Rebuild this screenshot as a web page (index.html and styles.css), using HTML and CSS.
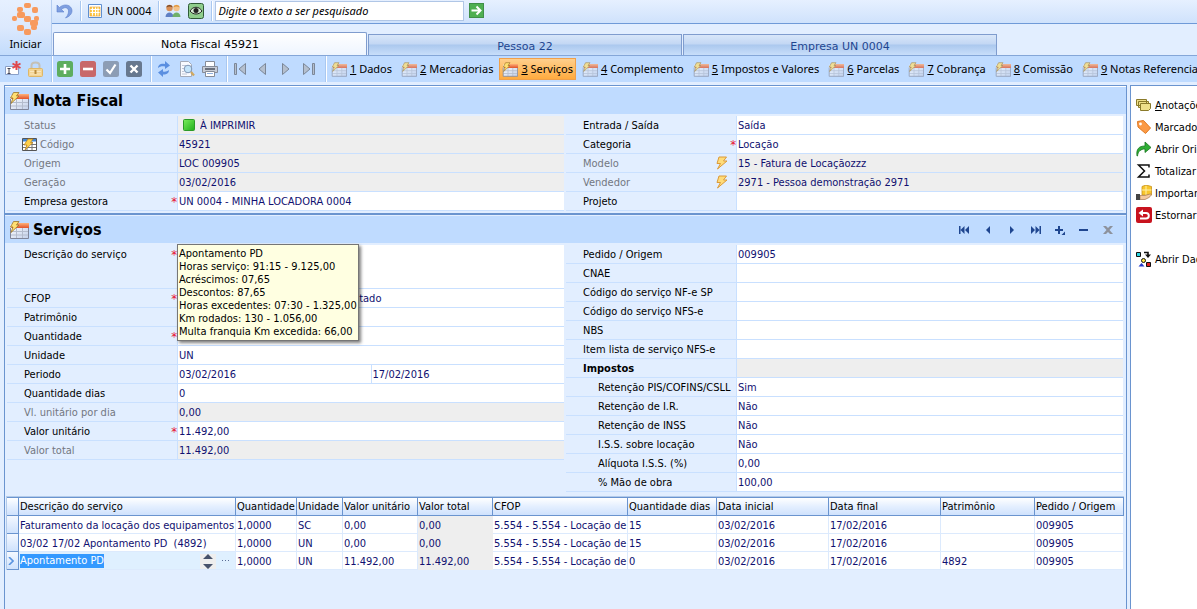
FILE: index.html
```html
<!DOCTYPE html>
<html lang="pt-BR">
<head>
  <meta charset="UTF-8" />
  <meta name="viewport" content="width=device-width, initial-scale=1.0" />
  <title>Nota Fiscal 45921</title>
  <link rel="stylesheet" href="styles.css">
</head>
<body>
  <!-- shared icons -->
  <svg class="sprite" aria-hidden="true">
    <defs>
      <linearGradient id="g-head" x1="0" y1="0" x2="0" y2="1">
        <stop offset="0" stop-color="#ffb27a"/><stop offset="1" stop-color="#e2532a"/>
      </linearGradient>
      <linearGradient id="g-cell" x1="0" y1="0" x2="1" y2="1">
        <stop offset="0" stop-color="#ffffff"/><stop offset="1" stop-color="#c3d0ea"/>
      </linearGradient>
      <linearGradient id="g-green" x1="0" y1="0" x2="1" y2="1">
        <stop offset="0" stop-color="#7bee5c"/><stop offset="1" stop-color="#1fae1b"/>
      </linearGradient>
      <symbol id="i-table" viewBox="0 0 20 18">
        <path d="M1.500 3H19.500v14.500h-18z" fill="url(#g-cell)"/>
        <path d="M5.500 2H20v5H2z" fill="url(#g-head)"/>
        <path d="M2 10.500h17M2 14h17M7.500 7v10M13.500 7v10" stroke="#b4bccd" fill="none"/>
        <path d="M1.500 7v10.500h18V7" stroke="#80869a" fill="none"/>
        <path d="M4.500.5h5.500L7.500 4H10L2 11.500 4 6H1.500z" fill="#ffe073" stroke="#9a7428" stroke-width=".8"/>
      </symbol>
      <symbol id="i-bolt" viewBox="0 0 12 14">
        <path d="M3 1h7.500L7.500 5h3.500L1.500 13l3-5.500H1z" fill="#ffdc7a" stroke="#dc9a38"/>
      </symbol>
    </defs>
  </svg>

  <header class="top">
    <button class="start" type="button">
      <svg width="28" height="32" viewBox="0 0 28 32" fill="#f79a5e">
        <rect x="12" y="0" width="7" height="5" rx="2"/>
        <rect x="5" y="4" width="6" height="5" rx="2"/>
        <rect x="20" y="4" width="6" height="6" rx="2"/>
        <rect x="5" y="9" width="8" height="6" rx="2"/>
        <rect x="0" y="13" width="5" height="5" rx="2"/>
        <rect x="12" y="13" width="7" height="6" rx="2"/>
        <rect x="22" y="13" width="5" height="5" rx="2"/>
        <rect x="18" y="17" width="8" height="6" rx="2"/>
        <rect x="5" y="22" width="7" height="6" rx="2"/>
        <rect x="19" y="22" width="6" height="5" rx="2"/>
        <rect x="12" y="26" width="7" height="6" rx="2"/>
      </svg>
      <span>Iniciar</span>
    </button>

    <div class="top-main">
      <div class="quick">
        <button class="quick-undo" type="button" aria-label="Desfazer">
          <svg width="18" height="16" viewBox="0 0 18 16"><path d="M1 2v7h7L5.500 6.500C9 3 13 5 12.500 9c-.3 2.500-1.500 4.500-3 6C15 13 17 9 15.500 5.500 13.500 1 7 1 3.500 4.500z" fill="#7f9fe0" stroke="#5c80cc" stroke-width=".6"/></svg>
        </button>
        <span class="sep"></span>
        <button class="quick-unit" type="button">
          <svg width="14" height="14" viewBox="0 0 14 14"><path fill="#fff" stroke="#5f8fd0" d="M.5.5h13v13H.5z"/><path fill="#ffca4d" d="M2 3h10v9H2z"/><path d="M2 5.500h10M2 8.500h10M4.500 3v9M7.500 3v9M10 3v9" stroke="#fff"/><path d="M2 3h10v9H2z" fill="none" stroke="#e8a030" stroke-width=".6"/></svg>
          <span>UN 0004</span>
        </button>
        <span class="sep"></span>
        <button class="quick-icon" type="button" aria-label="Usuários">
          <svg width="16" height="14" viewBox="0 0 16 14"><circle cx="4.500" cy="4" r="3.200" fill="#d98f56"/><path d="M1.500 3.500C1 0 8 0 7.500 3.500 6 2 3 2 1.500 3.500z" fill="#7a4a28"/><path d="M.5 13c0-6 8-6 8 0z" fill="#5f7fc4"/><circle cx="11.500" cy="4" r="3.200" fill="#f3c38b"/><path d="M8.500 3.500C8 0 15 0 14.500 3.500 13 2 10 2 8.500 3.500z" fill="#e0953c"/><path d="M7.500 13c0-6 8-6 8 0z" fill="#6fb06a"/></svg>
        </button>
        <button class="quick-icon" type="button" aria-label="Visualizar">
          <svg width="16" height="16" viewBox="0 0 16 16"><rect x=".5" y=".5" width="15" height="15" rx="2" fill="#8fce8c" stroke="#2f5a37"/><path d="M2 8c3-5 9-5 12 0-3 4-9 4-12 0z" fill="#d8efd6" stroke="#222"/><circle cx="8" cy="7.500" r="2.500" fill="#222"/></svg>
        </button>
        <span class="sep"></span>
        <input class="search" type="text" aria-label="Pesquisar" placeholder="Digite o texto a ser pesquisado">
        <button class="quick-go" type="button" aria-label="Ir">
          <svg width="15" height="15" viewBox="0 0 15 15"><rect x=".5" y=".5" width="14" height="14" fill="#4faf52" stroke="#3f8f48"/><path d="M2.500 7.500h9M7.500 3.500l4 4-4 4" stroke="#fff" stroke-width="2" fill="none"/></svg>
        </button>
      </div>
      <nav class="tabs">
        <button class="tab active" type="button">Nota Fiscal 45921</button>
        <button class="tab" type="button">Pessoa 22</button>
        <button class="tab" type="button">Empresa UN 0004</button>
      </nav>
    </div>
  </header>

  <div class="toolbar">
    <div class="tools">
      <button type="button" aria-label="Renomear"><svg width="16" height="16" viewBox="0 0 16 16"><path fill="#fff" stroke="#8aa0c8" d="M.5 5.500h13v8H.5z"/><path d="M2.500 7.500h3M4 7.500v5M2.500 12.500h3" stroke="#445" fill="none"/><path d="M11.500 0v9M7.500 2.500l8 4.500M15.500 2.500l-8 4.500" stroke="#e0484c" stroke-width="2"/></svg></button>
      <button type="button" aria-label="Bloquear"><svg width="15" height="16" viewBox="0 0 15 16"><path d="M3.500 8V4.500c0-4 8-4 8 0V8" fill="none" stroke="#c4c0b6" stroke-width="2"/><rect x=".5" y="7.500" width="14" height="8" rx="1" fill="#f3d494" stroke="#dfb766"/><path d="M2 10.500h11M2 13h11" stroke="#fbe7bd"/><path d="M7.500 9v4" stroke="#b98b3a" stroke-width="2"/></svg></button>
    </div>
    <span class="sep"></span>
    <div class="tools">
      <button type="button" aria-label="Incluir"><svg width="16" height="16" viewBox="0 0 16 16"><rect width="16" height="16" rx="2.500" fill="#5dad5f"/><path d="M8 3v10M3 8h10" stroke="#fff" stroke-width="2.600"/></svg></button>
      <button type="button" aria-label="Excluir"><svg width="16" height="16" viewBox="0 0 16 16"><rect width="16" height="16" rx="2.500" fill="#c8686a"/><path d="M3 8h10" stroke="#fff" stroke-width="2.600"/></svg></button>
      <button type="button" aria-label="Confirmar"><svg width="16" height="16" viewBox="0 0 16 16"><rect width="16" height="16" rx="2.500" fill="#8c9db5"/><path d="M3.500 8.500l3.500 3.500 5.500-8.500" stroke="#fff" stroke-width="2.200" fill="none"/></svg></button>
      <button type="button" aria-label="Cancelar"><svg width="16" height="16" viewBox="0 0 16 16"><rect width="16" height="16" rx="2.500" fill="#67788f"/><path d="M4.500 4.500l7 7M11.500 4.500l-7 7" stroke="#fff" stroke-width="2.400"/></svg></button>
    </div>
    <span class="sep"></span>
    <div class="tools">
      <button type="button" aria-label="Atualizar"><svg width="16" height="16" viewBox="0 0 16 16"><path d="M2 7c0-4 4-5 7-4V0l5 4.500L9 8V5.500C6 5 4 5.500 2 7z" fill="#5b8fe0"/><path d="M13 9c0 4-4 5-6 4.500V16l-5-4.500L7 8v2.500c2 .5 4 0 6-1.500z" fill="#5b8fe0"/></svg></button>
      <button type="button" aria-label="Visualizar impressão"><svg width="16" height="16" viewBox="0 0 16 16"><path fill="#f8faff" stroke="#a5abb8" d="M1.500.5h8l3 3v12h-11z"/><path d="M3 4.500h4M3 7.500h2M3 10.500h2M3 13h5" stroke="#c0c7d6"/><circle cx="9" cy="8" r="3.800" fill="#c4e4fa" stroke="#7d94b4"/><path d="M12 11l3 3.500" stroke="#d0a860" stroke-width="2.200"/></svg></button>
      <button type="button" aria-label="Imprimir"><svg width="16" height="16" viewBox="0 0 16 16"><path fill="#fff" stroke="#868c98" d="M3.500.5h9v5h-9z"/><path fill="#c7ccd6" stroke="#868c98" d="M.5 5.500h15v6H.5z"/><path fill="#6a707b" d="M3 7h10v2H3z"/><path fill="#fff" stroke="#868c98" d="M3.500 10.500h9v5h-9z"/><path d="M5 12.500h6" stroke="#8fb0e0"/></svg></button>
    </div>
    <span class="sep"></span>
    <div class="tools">
      <button type="button" aria-label="Primeiro"><svg width="16" height="14" viewBox="0 0 16 14" fill="#b4bfce" stroke="#7c8797"><path d="M2.500 1.500h2v11h-2zM13.500 1.500v11L7 7z"/></svg></button>
      <button type="button" aria-label="Anterior"><svg width="16" height="14" viewBox="0 0 16 14" fill="#b4bfce" stroke="#7c8797"><path d="M10.500 1.500v11L4 7z"/></svg></button>
      <button type="button" aria-label="Próximo"><svg width="16" height="14" viewBox="0 0 16 14" fill="#b4bfce" stroke="#7c8797"><path d="M4.500 1.500v11L11 7z"/></svg></button>
      <button type="button" aria-label="Último"><svg width="16" height="14" viewBox="0 0 16 14" fill="#b4bfce" stroke="#7c8797"><path d="M11.500 1.500h2v11h-2zM2.500 1.500v11L9 7z"/></svg></button>
    </div>
    <span class="sep"></span>
    <nav class="pages">
      <button class="page" type="button"><svg><use href="#i-table"/></svg><span><u>1</u> Dados</span></button>
      <button class="page" type="button"><svg><use href="#i-table"/></svg><span><u>2</u> Mercadorias</span></button>
      <button class="page current" type="button"><svg><use href="#i-table"/></svg><span><u>3</u> Serviços</span></button>
      <button class="page" type="button"><svg><use href="#i-table"/></svg><span><u>4</u> Complemento</span></button>
      <button class="page" type="button"><svg><use href="#i-table"/></svg><span><u>5</u> Impostos e Valores</span></button>
      <button class="page" type="button"><svg><use href="#i-table"/></svg><span><u>6</u> Parcelas</span></button>
      <button class="page" type="button"><svg><use href="#i-table"/></svg><span><u>7</u> Cobrança</span></button>
      <button class="page" type="button"><svg><use href="#i-table"/></svg><span><u>8</u> Comissão</span></button>
      <button class="page" type="button"><svg><use href="#i-table"/></svg><span><u>9</u> Notas Referenciadas</span></button>
    </nav>
  </div>

  <div class="workspace">
    <main class="panel">
      <section class="block">
        <div class="block-head">
          <svg class="head-icon"><use href="#i-table"/></svg>
          <h2>Nota Fiscal</h2>
        </div>
        <div class="form">
          <div class="col">
            <div class="row locked"><label for="status">Status</label><div class="status"><svg width="12" height="12"><rect x=".5" y=".5" width="11" height="11" rx="1" fill="url(#g-green)" stroke="#2c9a28"/></svg><input id="status" value="À IMPRIMIR" readonly></div></div>
            <div class="row locked"><label for="codigo" class="with-icon"><svg width="15" height="13" viewBox="0 0 15 13"><path fill="#fff" stroke="#555" d="M.5.500h14v12H.5z"/><path fill="#3f86d8" d="M1 1h13v2.500H1z"/><path d="M1 6.500h13M1 9.500h13M5 4v8M10 4v8" stroke="#777"/><path d="M6 1h5L8.500 4.500H11L3 12l2-5H2z" fill="#ffd04a" stroke="#b57d1a" stroke-width=".7"/></svg>Código</label><input id="codigo" value="45921" readonly></div>
            <div class="row locked"><label for="origem">Origem</label><input id="origem" value="LOC 009905" readonly></div>
            <div class="row locked"><label for="geracao">Geração</label><input id="geracao" value="03/02/2016" readonly></div>
            <div class="row required"><label for="empresa">Empresa gestora</label><input id="empresa" value="UN 0004 - MINHA LOCADORA 0004"></div>
          </div>
          <div class="col">
            <div class="row"><label for="entrada">Entrada / Saída</label><input id="entrada" value="Saída"></div>
            <div class="row required"><label for="categoria">Categoria</label><input id="categoria" value="Locação"></div>
            <div class="row locked"><label for="modelo">Modelo<svg class="bolt"><use href="#i-bolt"/></svg></label><input id="modelo" value="15 - Fatura de Locaçãozzz" readonly></div>
            <div class="row locked"><label for="vendedor">Vendedor<svg class="bolt"><use href="#i-bolt"/></svg></label><input id="vendedor" value="2971 - Pessoa demonstração 2971" readonly></div>
            <div class="row"><label for="projeto">Projeto</label><input id="projeto" value=""></div>
          </div>
        </div>
      </section>

      <section class="block">
        <div class="block-head">
          <svg class="head-icon"><use href="#i-table"/></svg>
          <h2>Serviços</h2>
          <div class="navigator">
            <button type="button" aria-label="Primeiro"><svg viewBox="0 0 10 8"><path d="M0 0h1.500v8H0zM5.500 0v8L1.500 4zM10 0v8L6 4z"/></svg></button>
            <button type="button" aria-label="Anterior"><svg viewBox="0 0 10 8"><path d="M7 0v8L3 4z"/></svg></button>
            <button type="button" aria-label="Próximo"><svg viewBox="0 0 10 8"><path d="M3 0v8l4-4z"/></svg></button>
            <button type="button" aria-label="Último"><svg viewBox="0 0 10 8"><path d="M8.500 0H10v8H8.500zM0 0v8l4-4zM4.500 0v8l4-4z"/></svg></button>
            <button type="button" aria-label="Incluir"><svg viewBox="0 0 10 8"><path d="M3 0h2v3h3v2H5v3H3V5H0V3h3zM10 5.500V9H6.500z"/></svg></button>
            <button type="button" aria-label="Excluir"><svg viewBox="0 0 10 8"><path d="M0 3h9v2H0z"/></svg></button>
            <button type="button" aria-label="Fechar" disabled><svg viewBox="0 0 10 8"><path d="M0 0h3l2 2 2-2h3L6.500 4 10 8H7L5 6 3 8H0l3.500-4z"/></svg></button>
          </div>
        </div>
        <div class="form">
          <div class="col">
            <div class="row tall required">
              <label for="descricao">Descrição do serviço</label>
              <textarea id="descricao"></textarea>
              <div class="hint" role="tooltip">Apontamento PD<br>Horas serviço: 91:15 - 9.125,00<br>Acréscimos: 07,65<br>Descontos: 87,65<br>Horas excedentes: 07:30 - 1.325,00<br>Km rodados: 130 - 1.056,00<br>Multa franquia Km excedida: 66,00</div>
            </div>
            <div class="row required"><label for="cfop">CFOP</label><input id="cfop" value="5.554 - 5.554 - Locação de bens contado"></div>
            <div class="row"><label for="patrimonio">Patrimônio</label><input id="patrimonio" value=""></div>
            <div class="row required"><label for="quantidade">Quantidade</label><input id="quantidade" value=""></div>
            <div class="row"><label for="unidade">Unidade</label><input id="unidade" value="UN"></div>
            <div class="row"><label for="periodo">Periodo</label><div class="pair"><input id="periodo" value="03/02/2016"><input aria-label="Fim do período" value="17/02/2016"></div></div>
            <div class="row"><label for="dias">Quantidade dias</label><input id="dias" value="0"></div>
            <div class="row locked"><label for="vldia">Vl. unitário por dia</label><input id="vldia" value="0,00" readonly></div>
            <div class="row required"><label for="vlunit">Valor unitário</label><input id="vlunit" value="11.492,00"></div>
            <div class="row locked"><label for="vltotal">Valor total</label><input id="vltotal" value="11.492,00" readonly></div>
          </div>
          <div class="col">
            <div class="row"><label for="pedido">Pedido / Origem</label><input id="pedido" value="009905"></div>
            <div class="row"><label for="cnae">CNAE</label><input id="cnae" value=""></div>
            <div class="row"><label for="nfesp">Código do serviço NF-e SP</label><input id="nfesp" value=""></div>
            <div class="row"><label for="nfse">Código do serviço NFS-e</label><input id="nfse" value=""></div>
            <div class="row"><label for="nbs">NBS</label><input id="nbs" value=""></div>
            <div class="row"><label for="lista">Item lista de serviço NFS-e</label><input id="lista" value=""></div>
            <div class="row group"><h3>Impostos</h3><div class="blank"></div></div>
            <div class="row sub"><label for="pis">Retenção PIS/COFINS/CSLL</label><input id="pis" value="Sim"></div>
            <div class="row sub"><label for="ir">Retenção de I.R.</label><input id="ir" value="Não"></div>
            <div class="row sub"><label for="inss">Retenção de INSS</label><input id="inss" value="Não"></div>
            <div class="row sub"><label for="iss">I.S.S. sobre locação</label><input id="iss" value="Não"></div>
            <div class="row sub"><label for="aliquota">Alíquota I.S.S. (%)</label><input id="aliquota" value="0,00"></div>
            <div class="row sub"><label for="obra">% Mão de obra</label><input id="obra" value="100,00"></div>
          </div>
        </div>

        <div class="grid">
          <table>
            <colgroup>
              <col class="c-mark"><col class="c-desc"><col class="c-qty"><col class="c-unit"><col class="c-value"><col class="c-value"><col class="c-cfop"><col class="c-days"><col class="c-date"><col class="c-date"><col class="c-asset"><col>
            </colgroup>
            <thead>
              <tr><th></th><th>Descrição do serviço</th><th>Quantidade</th><th>Unidade</th><th>Valor unitário</th><th>Valor total</th><th>CFOP</th><th>Quantidade dias</th><th>Data inicial</th><th>Data final</th><th>Patrimônio</th><th>Pedido / Origem</th></tr>
            </thead>
            <tbody>
              <tr><td class="mark"></td><td>Faturamento da locação dos equipamentos</td><td>1,0000</td><td>SC</td><td>0,00</td><td class="calc">0,00</td><td>5.554 - 5.554 - Locação de</td><td>15</td><td>03/02/2016</td><td>17/02/2016</td><td></td><td>009905</td></tr>
              <tr><td class="mark"></td><td>03/02 17/02 Apontamento PD&nbsp; (4892)</td><td>1,0000</td><td>UN</td><td>0,00</td><td class="calc">0,00</td><td>5.554 - 5.554 - Locação de</td><td>15</td><td>03/02/2016</td><td>17/02/2016</td><td></td><td>009905</td></tr>
              <tr>
                <td class="mark"><svg width="6" height="8" viewBox="0 0 6 8"><path d="M1 0l4 4-4 4" fill="none" stroke="#5a94e0" stroke-width="1.600"/></svg></td>
                <td class="editing"><div class="editor"><span class="selected">Apontamento PD</span><button class="spin" type="button" aria-label="Expandir"><svg width="10" height="15" viewBox="0 0 10 15" fill="#47526b"><path d="M0 5l5-5 5 5zM0 10h10l-5 5z"/></svg></button><button class="more" type="button" aria-label="Mais"><svg width="8" height="2" viewBox="0 0 8 2" fill="#5a6c94"><path d="M0 0h1v1H0zM3 0h1v1H3zM6 0h1v1H6z"/></svg></button></div></td>
                <td>1,0000</td><td>UN</td><td>11.492,00</td><td class="calc">11.492,00</td><td>5.554 - 5.554 - Locação de</td><td>0</td><td>03/02/2016</td><td>17/02/2016</td><td>4892</td><td>009905</td>
              </tr>
            </tbody>
          </table>
        </div>
      </section>
    </main>

    <aside class="side">
      <button type="button"><svg viewBox="0 0 16 16" fill="#efe08a" stroke="#8a7a2a"><path d="M.5 2.500h10v6H.5zM2.500 4.500h10v6h-10z"/><path d="M4.500 6.500h10v5l-2 2h-8z"/></svg><span><u>A</u>notações</span></button>
      <button type="button"><svg viewBox="0 0 16 16"><path d="M1.500 2.500l6-1 7 7.500-5 5.500-7.500-6.500z" fill="#fb9a45" stroke="#e07820"/><circle cx="4.500" cy="5" r="1.400" fill="#fff"/></svg><span>Marcadores</span></button>
      <button type="button"><svg viewBox="0 0 16 16"><path d="M1 15c-1-7 2-10 8-10V1l6 5.500-6 5V8C5 8 2 10 1.500 15z" fill="#2fae35" stroke="#17751e" stroke-width=".8"/></svg><span>Abrir Origem</span></button>
      <button type="button"><svg viewBox="0 0 16 16"><path d="M13 4.500V2H2.500l6 6-6 6H13v-2.500" fill="none" stroke="#111" stroke-width="1.500"/></svg><span>Totalizar</span></button>
      <button type="button"><svg viewBox="0 0 16 16"><path d="M6 1.500l4-1.500 5.500 1.500V10H6z" fill="#f8c62c" stroke="#c8921a" stroke-width=".8"/><path d="M10 1v9M6 5h9.500" stroke="#fff0a8"/><path d="M4 10.500h5l5-1.500c2 0 1 2-1 3.500L9 14.500H4z" fill="#f3c9a0" stroke="#a87850" stroke-width=".7"/><path d="M0 9h4v6H0z" fill="#444"/></svg><span>Importar</span></button>
      <button type="button"><svg viewBox="0 0 16 16"><rect width="16" height="16" rx="2" fill="#c8131e"/><path d="M4.500 6H10a2.800 2.800 0 0 1 0 5.600H4" fill="none" stroke="#fff" stroke-width="2"/><path d="M7 2.500v7L2.500 6z" fill="#fff"/></svg><span>Estornar</span></button>
      <button class="apart" type="button"><svg viewBox="0 0 16 16"><path d="M.5 1.500h4v4h-4z" fill="#2ad4e0" stroke="#111"/><path d="M8 1.500h4V4" fill="none" stroke="#111" stroke-width="1.600"/><path d="M9 3.500h6l-3 3.500z" fill="#111"/><circle cx="7.500" cy="9.500" r="2" fill="#ffe840" stroke="#111"/><path d="M2.500 15.500L5.500 12l3 3.500z" fill="#2238c8"/><path d="M10.500 11.500h4v4h-4z" fill="#e02020" stroke="#111"/></svg><span>Abrir Dados</span></button>
    </aside>
  </div>
</body>
</html>
```
FILE: styles.css
```css
* {
  box-sizing: border-box;
}

body {
  margin: 0;
  min-height: 100vh;
  display: flex;
  flex-direction: column;
  overflow: hidden;
  background: #e2eeff;
  color: #000;
  font-family: "DejaVu Sans Condensed", Tahoma, sans-serif;
  font-size: 11px;
}

button, input, textarea {
  margin: 0;
  padding: 0;
  border: 0;
  background: none;
  color: inherit;
  font: inherit;
}

input, textarea {
  min-width: 0;
  outline: none;
}

svg {
  display: block;
  flex: none;
}

.sprite {
  position: absolute;
  width: 0;
  height: 0;
}

.sep {
  flex: none;
  width: 2px;
  height: 26px;
  border-left: 1px solid #a9c8f0;
  border-right: 1px solid #fff;
}

/* header */
.top {
  display: flex;
  height: 56px;
}

.start {
  width: 52px;
  display: flex;
  flex-direction: column;
  align-items: center;
  gap: 1px;
  padding-top: 3px;
  border-right: 1px solid #b4cdf0;
  border-bottom: 1px solid #84a6d8;
  background: linear-gradient(#e6f0ff, #dce9fd 50%, #c3dcfc);
  font: 11px/16px "Noto Sans", sans-serif;
}

.top-main {
  flex: 1;
  min-width: 0;
  display: flex;
  flex-direction: column;
  justify-content: space-between;
}

.quick {
  display: flex;
  align-items: center;
  height: 24px;
  padding: 0 4px 2px;
  border-bottom: 1px solid #6f9ad8;
  background: linear-gradient(#e6f0ff, #cfe2fc);
  font: 11px/18px "Noto Sans", sans-serif;
}

.quick .sep {
  height: 20px;
}

.quick-undo {
  margin-right: 6px;
}

.quick-unit {
  display: flex;
  align-items: center;
  gap: 5px;
  padding: 0 7px 0 6px;
}

.quick-icon {
  padding-left: 5px;
}

.quick-icon + .quick-icon {
  margin-right: 7px;
  padding-left: 7px;
}

.search {
  width: 249px;
  height: 20px;
  margin-left: 2px;
  padding: 0 2px;
  border: 1px solid #b0c6e6;
  background: #fff;
  font: italic 11px/18px "Noto Sans", sans-serif;
}

.search::placeholder {
  color: #000;
  opacity: 1;
}

.quick-go {
  margin-left: 5px;
}

.tabs {
  display: flex;
  align-items: flex-end;
  gap: 1px;
  padding-left: 1px;
  border-bottom: 1px solid #84a6d8;
}

.tab {
  width: 314px;
  height: 21px;
  padding-top: 3px;
  border: 1px solid #7f9cce;
  border-bottom: 0;
  background: linear-gradient(#d8e6f9, #c3d7f4 45%, #abc8ee 50%, #c8defa);
  color: #1f4690;
  font: 11px/18px "DejaVu Sans", Verdana, sans-serif;
}

.tab.active {
  height: 23px;
  padding-top: 1px;
  border-radius: 2px 2px 0 0;
  background: linear-gradient(#fff, #eef5ff);
  color: #000;
}

/* toolbar */
.toolbar {
  display: flex;
  align-items: center;
  height: 26px;
  padding-left: 5px;
  overflow: hidden;
  background: #bfdbff;
}

.tools {
  display: flex;
  flex: none;
  gap: 7px;
  padding-right: 8px;
}

.sep + .tools {
  padding-left: 4px;
}

.pages {
  display: flex;
  flex: 1;
  gap: 3px;
  min-width: 0;
  padding-left: 1px;
  overflow: hidden;
}

.page {
  display: flex;
  flex: none;
  align-items: center;
  gap: 3px;
  height: 22px;
  padding: 0 2px;
  border: 1px solid transparent;
  font: 11px/18px "Noto Sans", sans-serif;
  white-space: nowrap;
}

.page svg {
  width: 16px;
  height: 15px;
  opacity: .75;
}

.page.current {
  border-color: #f0a04a;
  background: linear-gradient(#ffcf8c, #ffab3f);
}

.page.current svg {
  opacity: 1;
}

/* work area */
.workspace {
  flex: 1;
  display: flex;
  gap: 3px;
  padding: 3px 0 0 4px;
}

.panel {
  flex: 1;
  min-width: 0;
  border: 1px solid #6a94cf;
  border-bottom: 0;
}

.block {
  border-top: 1px solid #fff;
}

.block + .block {
  margin-top: 2px;
  border-top: 2px solid #6a94cf;
}

.block-head {
  display: flex;
  align-items: center;
  gap: 4px;
  height: 27px;
  padding-left: 4px;
  background: #bfdbff;
}

.block + .block .block-head {
  height: 28px;
  border-top: 1px solid #e2eeff;
}

.head-icon {
  width: 20px;
  height: 18px;
}

h2 {
  margin: 0;
  font: bold 16px/20px "DejaVu Sans Condensed", Verdana, sans-serif;
}

.navigator {
  display: flex;
  margin-left: auto;
  padding-right: 6px;
}

.navigator button {
  display: flex;
  align-items: center;
  justify-content: center;
  width: 24px;
  height: 20px;
}

.navigator svg {
  width: 10px;
  height: 8px;
  overflow: visible;
  fill: #1f4690;
}

.navigator button:disabled svg {
  fill: #8d929c;
}

/* form rows */
.form {
  display: grid;
  grid-template-columns: 1fr 1fr;
  align-items: start;
  gap: 2px;
  padding: 2px 3px 0 2px;
}

.row {
  position: relative;
  display: flex;
  height: 19px;
  border-bottom: 1px solid #c9e0ff;
}

.row.tall {
  height: 44px;
}

.row label, .row h3 {
  display: flex;
  align-items: center;
  flex: none;
  width: 171px;
  height: 18px;
  margin: 0;
  padding-left: 17px;
  border-right: 1px solid #c9e0ff;
  white-space: nowrap;
}

.row.sub label {
  padding-left: 32px;
}

.row h3 {
  font-size: 11px;
}

.row.locked label {
  color: #73777f;
}

.row .with-icon {
  gap: 3px;
  padding-left: 15px;
}

.bolt {
  width: 12px;
  height: 14px;
  margin-left: auto;
  margin-right: 8px;
}

.required label::after {
  content: "*";
  margin-left: auto;
  color: #e8112d;
  font-size: 13px;
  line-height: 13px;
}

.row input, .row textarea, .status, .pair, .blank {
  flex: 1;
  background: #fff;
  color: #101070;
}

.row input, .row textarea {
  padding: 0 1px;
  resize: none;
}

.row.locked input, .status, .blank {
  background: #eee;
}

.status {
  display: flex;
  align-items: center;
  gap: 4px;
  padding-left: 5px;
}

.pair {
  display: flex;
}

.pair input + input {
  border-left: 1px solid #c9e0ff;
}

.hint {
  position: absolute;
  z-index: 1;
  top: -1px;
  left: 170px;
  padding: 2px 1px;
  border: 1px solid #767676;
  background: #ffffe1;
  box-shadow: 2px 2px 3px rgba(0, 0, 0, .5);
  line-height: 13px;
  white-space: nowrap;
}

/* items grid */
.grid {
  margin: 4px 2px 0 1px;
  border-left: 1px solid #b3cbea;
  border-top: 1px solid #b3cbea;
}

table {
  width: 100%;
  table-layout: fixed;
  border-collapse: separate;
  border-spacing: 0;
}

th, td {
  padding: 0 1px;
  overflow: hidden;
  text-align: left;
  white-space: nowrap;
}

th {
  height: 19px;
  border: solid #6a94cf;
  border-width: 1px 1px 1px 0;
  background: linear-gradient(#fff, #e4efff 50%, #cfe2fd);
  font-weight: normal;
}

td {
  height: 18px;
  padding: 1px 0 0 1px;
  border-right: 1px solid #dceafd;
  border-bottom: 1px solid #dceafd;
  background: #fff;
  color: #101070;
}

td.mark {
  border-color: #6a94cf;
  background: linear-gradient(#f4f8ff, #cfe2fd);
}

td.calc {
  border-color: #eee;
  background: #eee;
}

td.editing {
  background: #dff0ff;
}

.editor {
  display: flex;
  align-items: center;
  height: 16px;
}

.selected {
  background: #3399ff;
  color: #fff;
  line-height: 14px;
}

.spin {
  margin-left: auto;
  padding: 0 3px;
  background: #eee;
}

.more {
  padding: 0 5px 0 6px;
}

.c-mark { width: 12px; }
.c-desc { width: 217px; }
.c-qty { width: 61px; }
.c-unit { width: 46px; }
.c-value { width: 75px; }
.c-cfop { width: 135px; }
.c-days { width: 89px; }
.c-date { width: 112px; }
.c-asset { width: 94px; }

/* side actions */
.side {
  flex: none;
  width: 67px;
  overflow: hidden;
  padding: 8px 0 0 5px;
  border-left: 1px solid #6a94cf;
  border-top: 1px solid #6a94cf;
  background: #fff;
}

.side button {
  display: flex;
  align-items: center;
  gap: 3px;
  height: 22px;
  white-space: nowrap;
}

.side svg {
  width: 16px;
  height: 16px;
}

.side .apart {
  margin-top: 22px;
}
```
